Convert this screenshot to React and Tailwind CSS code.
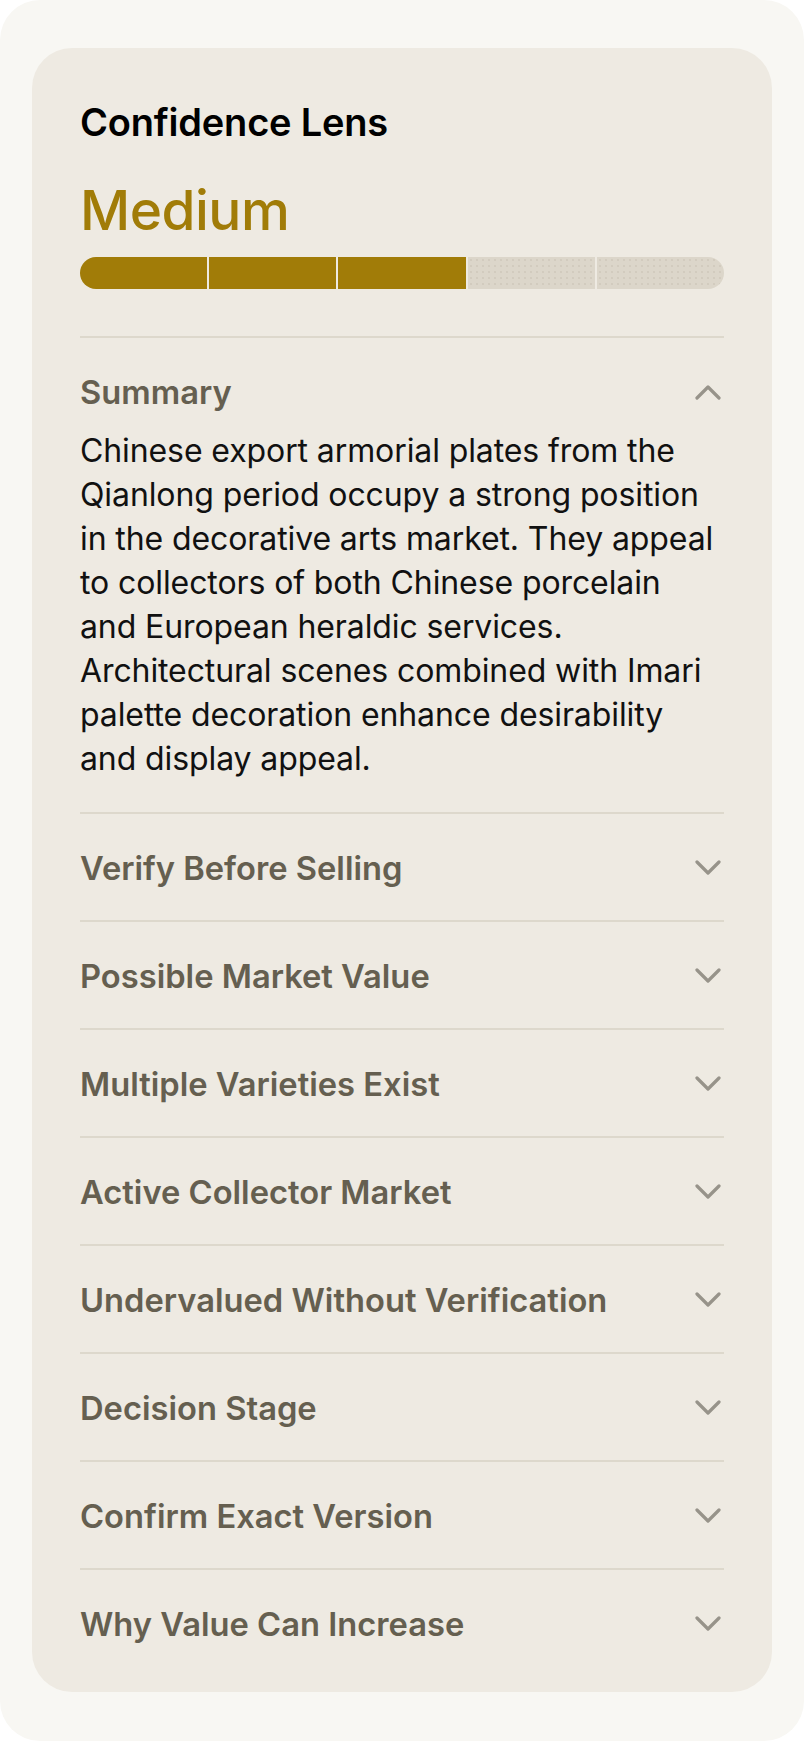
import { useState } from "react";

const sections = [
  "Verify Before Selling",
  "Possible Market Value",
  "Multiple Varieties Exist",
  "Active Collector Market",
  "Undervalued Without Verification",
  "Decision Stage",
  "Confirm Exact Version",
  "Why Value Can Increase",
];

function Chevron({ up }) {
  return (
    <svg width="28" height="16" viewBox="0 0 28 16" fill="none" className="shrink-0 mr-[2px]">
      <polyline
        points={up ? "3,14 14,3 25,14" : "3,2 14,13 25,2"}
        stroke="#97938a"
        strokeWidth="3.2"
        strokeLinecap="round"
        strokeLinejoin="round"
      />
    </svg>
  );
}

export default function App() {
  const [open, setOpen] = useState("Summary");
  const filled = 3;

  return (
    <div className="min-h-[1742px] w-[804px] bg-white font-['Inter',sans-serif]">
      <div className="bg-[#f8f7f3] rounded-[40px] px-8 pt-12 pb-[49px]">
        <div className="bg-[#eeeae2] rounded-[40px] px-12 pt-[51px] pb-4">
          {/* Header */}
          <h2 className="text-[38px] leading-[46px] font-semibold text-black tracking-[-0.2px]">
            Confidence Lens
          </h2>
          <div className="mt-[33px] text-[55px] leading-[64px] font-medium text-[#a17c08] tracking-[-0.5px]">
            Medium
          </div>

          {/* Level bar */}
          <div className="mt-[15px] flex gap-[2px] h-8 rounded-full overflow-hidden">
            {[0, 1, 2, 3, 4].map((i) => (
              <div
                key={i}
                className={
                  i < filled
                    ? "flex-1 bg-[#a17c08]"
                    : "flex-1 bg-[#dcd6ca] bg-[radial-gradient(circle,#d2cbbe_0.7px,transparent_1px)] bg-[length:6px_6px]"
                }
              />
            ))}
          </div>

          {/* Accordion */}
          <div className="mt-[47px]">
            <div className="border-t-2 border-[#ddd8cc]">
              <button
                onClick={() => setOpen(open === "Summary" ? null : "Summary")}
                className="w-full flex items-center justify-between pt-[34px] pb-[17px] text-left"
              >
                <span className="text-[32.7px] leading-[40px] font-semibold text-[#655f50]">Summary</span>
                <Chevron up={open === "Summary"} />
              </button>
              {open === "Summary" && (
                <p className="text-[32px] leading-[44px] text-[#111] pb-[31px] tracking-[-0.1px]">
                  Chinese export armorial plates from the Qianlong period occupy a strong position in the
                  decorative arts market. They appeal to collectors of both Chinese porcelain and European
                  heraldic services. Architectural scenes combined with Imari palette decoration enhance
                  desirability and display appeal.
                </p>
              )}
            </div>

            {sections.map((s) => (
              <div key={s} className="border-t-2 border-[#ddd8cc]">
                <button
                  onClick={() => setOpen(open === s ? null : s)}
                  className="w-full flex items-center justify-between pt-[34px] pb-[32px] text-left"
                >
                  <span className="text-[32.7px] leading-[40px] font-semibold text-[#655f50]">{s}</span>
                  <Chevron up={open === s} />
                </button>
              </div>
            ))}
          </div>
        </div>
      </div>
    </div>
  );
}
